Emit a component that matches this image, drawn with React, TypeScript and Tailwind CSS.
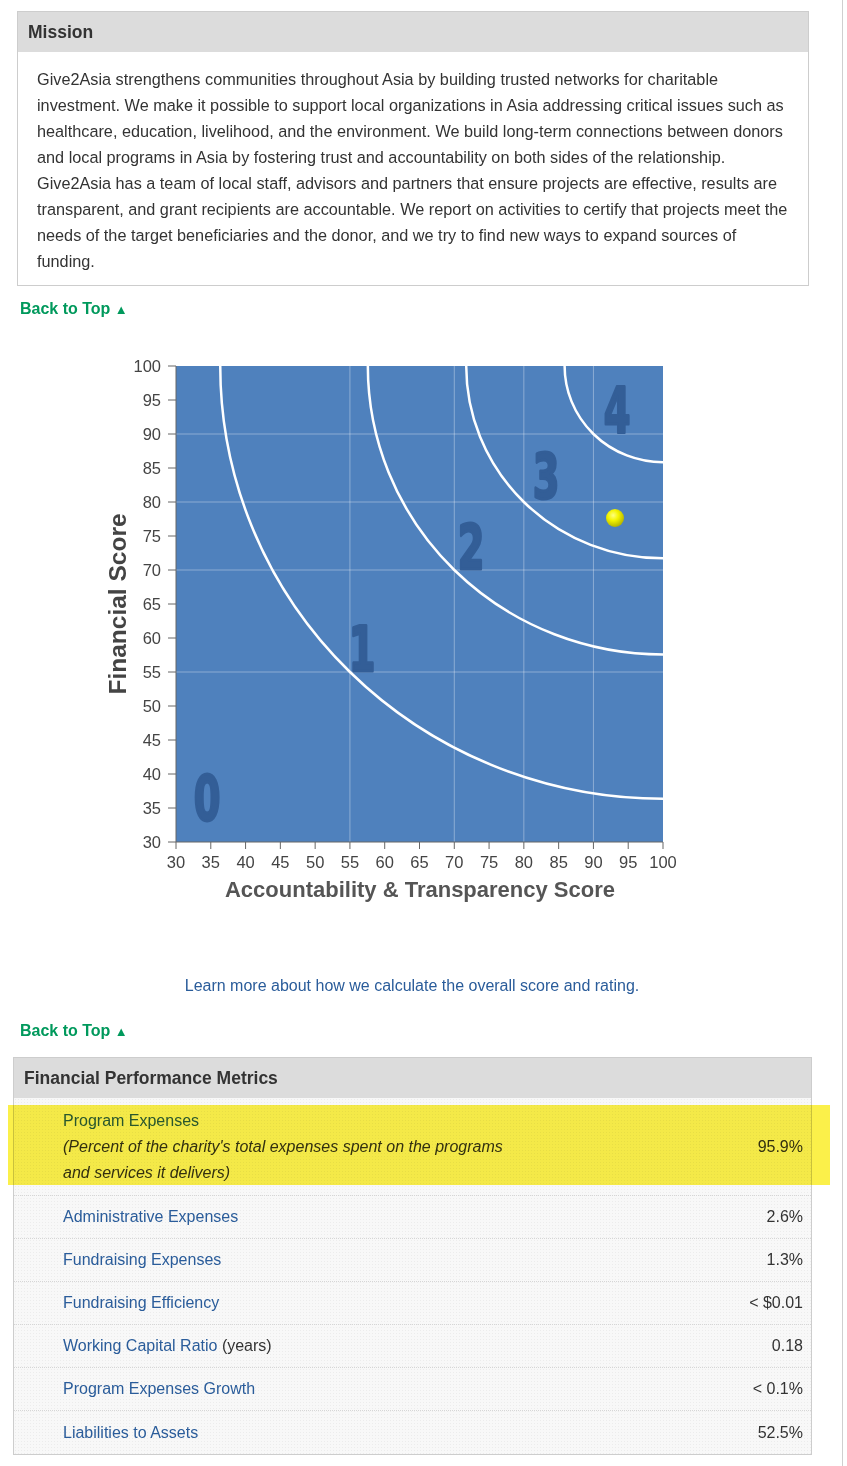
import React from "react";

const blue = "text-[#2a5c9a]";

const X = (v: number) => 176 + ((v - 30) * 487) / 70;
const Y = (v: number) => 46 + ((100 - v) * 476) / 70;
const ticks = Array.from({ length: 15 }, (_, i) => 30 + i * 5);
const grid = [55, 70, 80, 90];

const zones = [
  { r: 45 * Math.SQRT2 },
  { r: 30 * Math.SQRT2 },
  { r: 20 * Math.SQRT2 },
  { r: 10 * Math.SQRT2 },
];

const digits = [
  { d: "0", x: 207, y: 500 },
  { d: "1", x: 362, y: 351 },
  { d: "2", x: 471, y: 249 },
  { d: "3", x: 546, y: 178 },
  { d: "4", x: 617, y: 112 },
];

const mission = [
  "Give2Asia strengthens communities throughout Asia by building trusted networks for charitable",
  "investment. We make it possible to support local organizations in Asia addressing critical issues such as",
  "healthcare, education, livelihood, and the environment. We build long-term connections between donors",
  "and local programs in Asia by fostering trust and accountability on both sides of the relationship.",
  "Give2Asia has a team of local staff, advisors and partners that ensure projects are effective, results are",
  "transparent, and grant recipients are accountable. We report on activities to certify that projects meet the",
  "needs of the target beneficiaries and the donor, and we try to find new ways to expand sources of",
  "funding.",
];

const metrics = [
  { label: "Administrative Expenses", value: "2.6%" },
  { label: "Fundraising Expenses", value: "1.3%" },
  { label: "Fundraising Efficiency", value: "< $0.01" },
  { label: "Working Capital Ratio", extra: " (years)", value: "0.18" },
  { label: "Program Expenses Growth", value: "< 0.1%" },
  { label: "Liabilities to Assets", value: "52.5%" },
];

function BackToTop({ className = "" }: { className?: string }) {
  return (
    <div className={`ml-[20px] text-[16px] font-bold leading-[20px] text-[#00995c] ${className}`}>
      Back to Top <span className="text-[13px]">▲</span>
    </div>
  );
}

function ScoreChart() {
  const rx = 487 / 70;
  const ry = 476 / 70;
  return (
    <svg width={700} height={590} className="block" style={{ fontFamily: '"Liberation Sans", Arial, sans-serif' }}>
      <defs>
        <radialGradient id="dot" cx="40%" cy="35%" r="65%">
          <stop offset="0%" stopColor="#ffff80" />
          <stop offset="45%" stopColor="#f4f400" />
          <stop offset="100%" stopColor="#b5b500" />
        </radialGradient>
        <clipPath id="plot">
          <rect x={X(30)} y={Y(100)} width={X(100) - X(30)} height={Y(30) - Y(100)} />
        </clipPath>
      </defs>

      {/* plot area */}
      <rect x={X(30)} y={Y(100)} width={X(100) - X(30)} height={Y(30) - Y(100)} fill="#4f81bd" />

      {grid.map((g) => (
        <g key={g} stroke="#ffffff" strokeOpacity={0.35} strokeWidth={1}>
          <line x1={X(g)} x2={X(g)} y1={Y(100)} y2={Y(30)} />
          <line x1={X(30)} x2={X(100)} y1={Y(g)} y2={Y(g)} />
        </g>
      ))}

      {digits.map((n) => (
        <text
          key={n.d}
          x={0}
          y={0}
          transform={`translate(${n.x} ${n.y}) scale(0.62 1)`}
          textAnchor="middle"
          fontSize={62}
          fontWeight="bold"
          fill="#335e97"
          stroke="#335e97"
          strokeWidth={3}
          strokeLinejoin="round"
          style={{ fontFamily: '"DejaVu Sans", sans-serif' }}
        >
          {n.d}
        </text>
      ))}

      <g clipPath="url(#plot)" fill="none" stroke="#ffffff" strokeWidth={2.5}>
        {zones.map((z) => (
          <path
            key={z.r}
            d={`M ${X(100 - z.r)} ${Y(100)} A ${z.r * rx} ${z.r * ry} 0 0 0 ${X(100)} ${Y(100 - z.r)}`}
          />
        ))}
      </g>

      <circle cx={615} cy={198} r={9} fill="url(#dot)" />

      {/* axes */}
      <g stroke="#666" strokeWidth={1}>
        <line x1={X(30)} x2={X(30)} y1={Y(100)} y2={Y(30)} />
        <line x1={X(30)} x2={X(100)} y1={Y(30)} y2={Y(30)} />
        {ticks.map((t) => (
          <g key={t}>
            <line x1={X(30) - 8} x2={X(30)} y1={Y(t)} y2={Y(t)} />
            <line x1={X(t)} x2={X(t)} y1={Y(30)} y2={Y(30) + 7} />
          </g>
        ))}
      </g>

      <g fill="#444" fontSize={16.5}>
        {ticks.map((t) => (
          <text key={`y${t}`} x={161} y={Y(t)} textAnchor="end" dominantBaseline="central">
            {t}
          </text>
        ))}
        {ticks.map((t) => (
          <text key={`x${t}`} x={X(t)} y={542} textAnchor="middle" dominantBaseline="central">
            {t}
          </text>
        ))}
      </g>

      <text x={420} y={569} textAnchor="middle" dominantBaseline="central" fontSize={22} fontWeight="bold" fill="#555">
        Accountability &amp; Transparency Score
      </text>
      <text
        x={0}
        y={0}
        transform="translate(117 284) rotate(-90)"
        textAnchor="middle"
        dominantBaseline="central"
        fontSize={24.5}
        fontWeight="bold"
        fill="#444"
      >
        Financial Score
      </text>
    </svg>
  );
}

export default function App() {
  return (
    <div
      className="min-h-[1466px] w-[843px] border-r border-[#cfcfcf] bg-white pt-[11px] text-[#333]"
      style={{ fontFamily: '"Liberation Sans", Arial, sans-serif' }}
    >
      {/* Mission */}
      <section className="ml-[17px] w-[792px] border border-[#cdcdcd]">
        <h2 className="flex h-[40px] items-center bg-[#dcdcdc] px-[10px] text-[17.5px] font-bold">Mission</h2>
        <p className="whitespace-nowrap px-[19px] pb-[11px] pt-[14px] text-[16.25px] leading-[26px]">
          {mission.map((line, i) => (
            <React.Fragment key={i}>
              {line}
              {i < mission.length - 1 && <br />}
            </React.Fragment>
          ))}
        </p>
      </section>

      <BackToTop className="mt-[13px]" />

      <ScoreChart />

      <p className={`mt-[63px] w-[824px] text-center text-[16px] leading-[26px] ${blue}`}>
        Learn more about how we calculate the overall score and rating.
      </p>

      <BackToTop className="mt-[22px]" />

      {/* Financial metrics */}
      <section className="ml-[13px] mt-[15px] w-[799px] border border-[#cdcdcd]">
        <h2 className="flex h-[40px] items-center bg-[#dcdcdc] px-[10px] text-[17.5px] font-bold">
          Financial Performance Metrics
        </h2>
        <div className="bg-[#f8f8f8] bg-[radial-gradient(#ececec_0.8px,transparent_0.8px)] bg-[length:3px_3px]">
          <div className="relative flex items-center justify-between border-b border-dotted border-[#d6d6d6] pb-[9px] pl-[49px] pr-[8px] pt-[10px] text-[16px] leading-[26px]">
            <div>
              <div className={blue}>Program Expenses</div>
              <div className="italic">
                (Percent of the charity's total expenses spent on the programs
                <br />
                and services it delivers)
              </div>
            </div>
            <div>95.9%</div>
            <div className="pointer-events-none absolute -left-[6px] -right-[19px] top-[7px] h-[80px] bg-[#fbf04a] mix-blend-multiply" />
          </div>
          {metrics.map((m, i) => (
            <div
              key={m.label}
              className={`flex h-[43px] items-center justify-between pl-[49px] pr-[8px] text-[16px] ${
                i < metrics.length - 1 ? "border-b border-dotted border-[#d6d6d6]" : ""
              }`}
            >
              <div>
                <span className={blue}>{m.label}</span>
                {m.extra}
              </div>
              <div>{m.value}</div>
            </div>
          ))}
        </div>
      </section>
    </div>
  );
}
